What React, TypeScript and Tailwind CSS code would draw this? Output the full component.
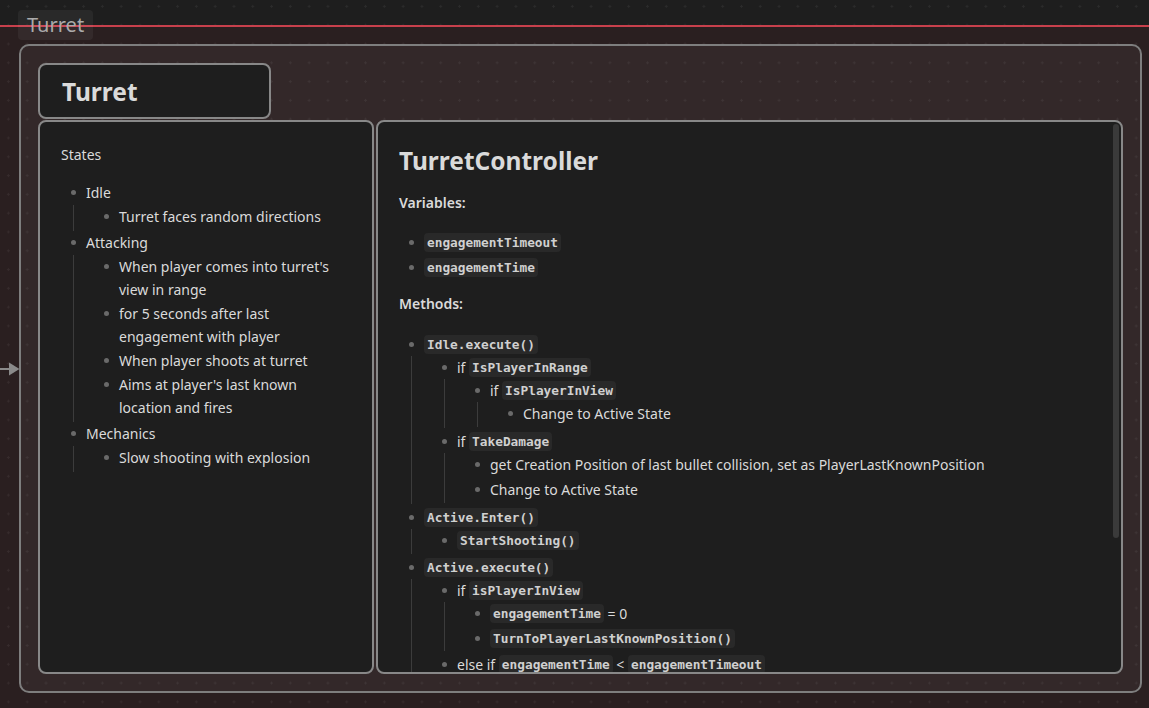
import React from "react";

type Seg = string | { code: string } | { br: true };
type Item = { t: Seg[]; c?: Item[] };

const C = (code: string) => ({ code });

const leftItems: Item[] = [
  { t: ["Idle"], c: [{ t: ["Turret faces random directions"] }] },
  {
    t: ["Attacking"],
    c: [
      { t: ["When player comes into turret's", { br: true }, "view in range"] },
      { t: ["for 5 seconds after last", { br: true }, "engagement with player"] },
      { t: ["When player shoots at turret"] },
      { t: ["Aims at player's last known", { br: true }, "location and fires"] },
    ],
  },
  { t: ["Mechanics"], c: [{ t: ["Slow shooting with explosion"] }] },
];

const varItems: Item[] = [{ t: [C("engagementTimeout")] }, { t: [C("engagementTime")] }];

const methodItems: Item[] = [
  {
    t: [C("Idle.execute()")],
    c: [
      {
        t: ["if ", C("IsPlayerInRange")],
        c: [{ t: ["if ", C("IsPlayerInView")], c: [{ t: ["Change to Active State"] }] }],
      },
      {
        t: ["if ", C("TakeDamage")],
        c: [
          { t: ["get Creation Position of last bullet collision, set as PlayerLastKnownPosition"] },
          { t: ["Change to Active State"] },
        ],
      },
    ],
  },
  { t: [C("Active.Enter()")], c: [{ t: [C("StartShooting()")] }] },
  {
    t: [C("Active.execute()")],
    c: [
      {
        t: ["if ", C("isPlayerInView")],
        c: [{ t: [C("engagementTime"), " = 0"] }, { t: [C("TurnToPlayerLastKnownPosition()")] }],
      },
      { t: ["else if ", C("engagementTime"), " < ", C("engagementTimeout")] },
    ],
  },
];

function Segs({ t }: { t: Seg[] }) {
  const hasCode = t.some((s) => typeof s !== "string" && "code" in s);
  const parts = t.map((s, i) => {
    if (typeof s === "string") return <span key={i} className="whitespace-pre">{s}</span>;
    if ("br" in s) return <br key={i} />;
    return (
      <code
        key={i}
        className="inline-block h-[19px] rounded-[4px] bg-[#292929] px-[3px] font-['DejaVu_Sans_Mono',monospace] text-[12.8px] font-bold leading-[19px] text-[#d0d0d0]"
      >
        {s.code}
      </code>
    );
  });
  if (hasCode) return <div className="flex h-[23px] items-center">{parts}</div>;
  return <div className="leading-[23px]">{parts}</div>;
}

function List({ items, variant }: { items: Item[]; variant: "left" | "right" }) {
  const left = variant === "left";
  return (
    <ul className={left ? "flex flex-col" : "flex flex-col gap-[2px]"}>
      {items.map((it, i) => (
        <li key={i}>
          <div className={left ? "mb-px flex" : "flex"}>
            <span className="flex h-[23px] w-[25px] shrink-0 items-center justify-center">
              <span className="h-[5px] w-[5px] rounded-full bg-[#6a6a6a]" />
            </span>
            <Segs t={it.t} />
          </div>
          {it.c && (
            <div
              className={
                left
                  ? "ml-[12px] border-l border-[#3c3c3c] pb-[2px] pl-[20px]"
                  : "ml-[12px] border-l border-[#3c3c3c] pb-[1.5px] pl-[20px]"
              }
            >
              <List items={it.c} variant={variant} />
            </div>
          )}
        </li>
      ))}
    </ul>
  );
}

export default function App() {
  return (
    <div className="relative h-[708px] w-[1149px] overflow-hidden bg-[#1e1e1e] bg-[radial-gradient(circle,#2b2b2b_1px,transparent_1.3px)] bg-[length:18.8px_18.8px] bg-[position:-1px_-3px] font-['Noto_Sans',sans-serif] text-[14px] text-[#dadada]">
      {/* red group */}
      <div className="absolute left-[-20px] right-[-20px] top-[25px] bottom-[-20px] border-t-2 border-[#c8404c] bg-[rgba(233,49,71,0.06)]" />

      {/* group label */}
      <div className="absolute left-[18px] top-[10px] h-[30px] rounded-[4px] bg-[rgba(255,255,255,0.05)] px-[9px] text-[20px] leading-[30px] text-[#ababab]">
        Turret
      </div>

      {/* incoming edge arrow */}
      <svg className="absolute left-0 top-[360px]" width="20" height="18" viewBox="0 0 20 18">
        <line x1="0" y1="9" x2="11" y2="9" stroke="#8a8a8a" strokeWidth="2" />
        <polygon points="9,2.5 19.5,9 9,15.5" fill="#8a8a8a" />
      </svg>

      {/* gray group */}
      <div className="absolute left-[19px] top-[44px] flex h-[649px] w-[1123px] flex-col rounded-[10px] border-2 border-[#7e7e7e] bg-[rgba(255,255,255,0.045)] p-[17px]">
        <div className="flex h-[56px] w-[233px] shrink-0 items-center rounded-[8px] border-2 border-[#888888] bg-[#1e1e1e] px-[22px] pt-[2px]">
          <h1 className="text-[24.5px] font-bold leading-[32px] text-[#dadada]">Turret</h1>
        </div>

        <div className="mt-[1px] flex min-h-0 flex-1 gap-[2px]">
          {/* left card */}
          <div className="w-[336px] shrink-0 overflow-hidden rounded-[8px] border-2 border-[#888888] bg-[#1e1e1e] pl-[21px] pr-[20px] pt-[21px]">
            <p className="leading-[23px]">States</p>
            <div className="mt-[15px]">
              <List items={leftItems} variant="left" />
            </div>
          </div>

          {/* right card */}
          <div className="relative min-w-0 flex-1 overflow-hidden rounded-[8px] border-2 border-[#888888] bg-[#1e1e1e] pl-[21px] pr-[20px]">
            <h1 className="mt-[23px] text-[24.5px] font-bold leading-[32px] text-[#dadada]">TurretController</h1>
            <p className="mt-[14px] font-semibold leading-[23px]">Variables:</p>
            <div className="mt-[17px]">
              <List items={varItems} variant="right" />
            </div>
            <p className="mt-[13px] font-semibold leading-[23px]">Methods:</p>
            <div className="mt-[18px]">
              <List items={methodItems} variant="right" />
            </div>
            <div className="absolute right-[2px] top-[2px] h-[414px] w-[6px] rounded-full bg-[#3a3a3a]" />
          </div>
        </div>
      </div>
    </div>
  );
}
